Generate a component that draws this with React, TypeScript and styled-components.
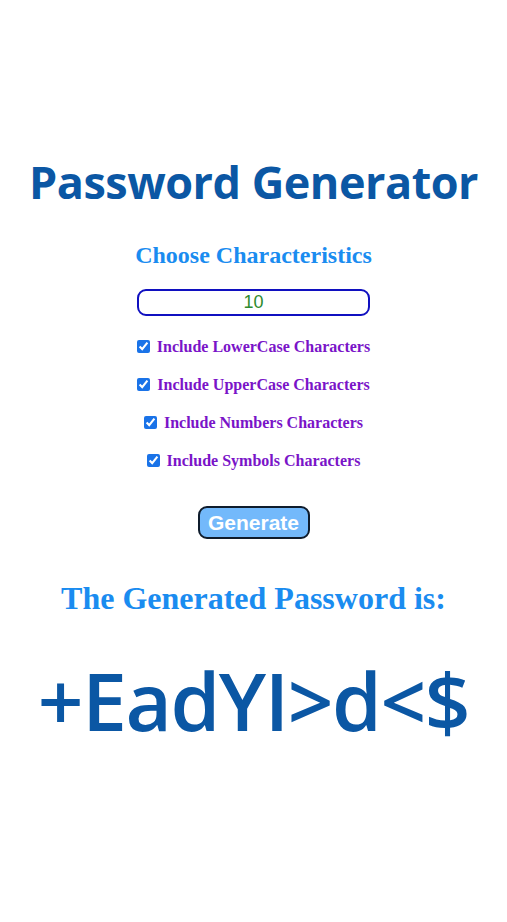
import React, { useState } from 'react';
import styled, { createGlobalStyle } from 'styled-components';

const GlobalStyle = createGlobalStyle`
    body {
        margin: 0;
        background: #ffffff;
    }
`;

const Page = styled.div`
    display: flex;
    flex-direction: column;
    align-items: center;
    padding-top: 154px;
`;

const Title = styled.h1`
    margin: 0;
    font-family: "Open Sans", "Noto Sans", sans-serif;
    font-weight: 700;
    font-size: 45px;
    line-height: 56px;
    letter-spacing: -0.5px;
    color: #0b57a4;
`;

const SubTitle = styled.h2<{ $size: number }>`
    margin: 0;
    font-family: "Liberation Serif", serif;
    font-weight: 700;
    font-size: ${(p) => p.$size}px;
    color: #1a8cf0;
`;

const Form = styled.div`
    display: flex;
    flex-direction: column;
    align-items: center;
    margin-top: 32px;
`;

const LengthInput = styled.input`
    box-sizing: border-box;
    width: 233px;
    height: 27px;
    margin-top: 20px;
    border: 2px solid #1010c0;
    border-radius: 9px;
    text-align: center;
    font-family: "Liberation Sans", Arial, sans-serif;
    font-size: 18px;
    color: #2e8b2e;
    outline: none;
`;

const Options = styled.div`
    display: flex;
    flex-direction: column;
    align-items: center;
    gap: 19px;
    margin-top: 21px;
`;

const Option = styled.label`
    display: flex;
    align-items: center;
    gap: 7px;
    height: 19px;
    font-family: "Liberation Serif", serif;
    font-weight: 700;
    font-size: 16px;
    color: #7a14c8;
    input {
        margin: 0;
        width: 13px;
        height: 13px;
        accent-color: #1a73e8;
    }
`;

const GenerateButton = styled.button`
    margin-top: 36px;
    width: 112px;
    height: 33px;
    border: 2px solid #0f1c2c;
    border-radius: 9px;
    background: #73b9fb;
    color: #ffffff;
    font-family: "Liberation Sans", Arial, sans-serif;
    font-weight: 700;
    font-size: 21px;
    padding: 0;
`;

const Result = styled.div`
    display: flex;
    flex-direction: column;
    align-items: center;
    margin-top: 41px;
`;

const PasswordText = styled.div`
    margin-top: 33px;
    font-family: "Open Sans", "Noto Sans", sans-serif;
    font-weight: 600;
    font-size: 80px;
    line-height: 100px;
    letter-spacing: -1.4px;
    color: #0b57a4;
`;

const options = [
    'Include LowerCase Characters',
    'Include UpperCase Characters',
    'Include Numbers Characters',
    'Include Symbols Characters',
];

const App: React.FC = () => {
    const [length, setLength] = useState('10');
    const [checked, setChecked] = useState([true, true, true, true]);

    return (
        <>
            <GlobalStyle />
            <Page>
                <Title>Password Generator</Title>
                <Form>
                    <SubTitle $size={24}>Choose Characteristics</SubTitle>
                    <LengthInput value={length} onChange={(e) => setLength(e.target.value)} />
                    <Options>
                        {options.map((label, i) => (
                            <Option key={label}>
                                <input
                                    type="checkbox"
                                    checked={checked[i]}
                                    onChange={() => setChecked(checked.map((c, j) => (j === i ? !c : c)))}
                                />
                                {label}
                            </Option>
                        ))}
                    </Options>
                    <GenerateButton>Generate</GenerateButton>
                </Form>
                <Result>
                    <SubTitle $size={32}>The Generated Password is:</SubTitle>
                    <PasswordText>+EadYI&gt;d&lt;$</PasswordText>
                </Result>
            </Page>
        </>
    );
};

export default App;
